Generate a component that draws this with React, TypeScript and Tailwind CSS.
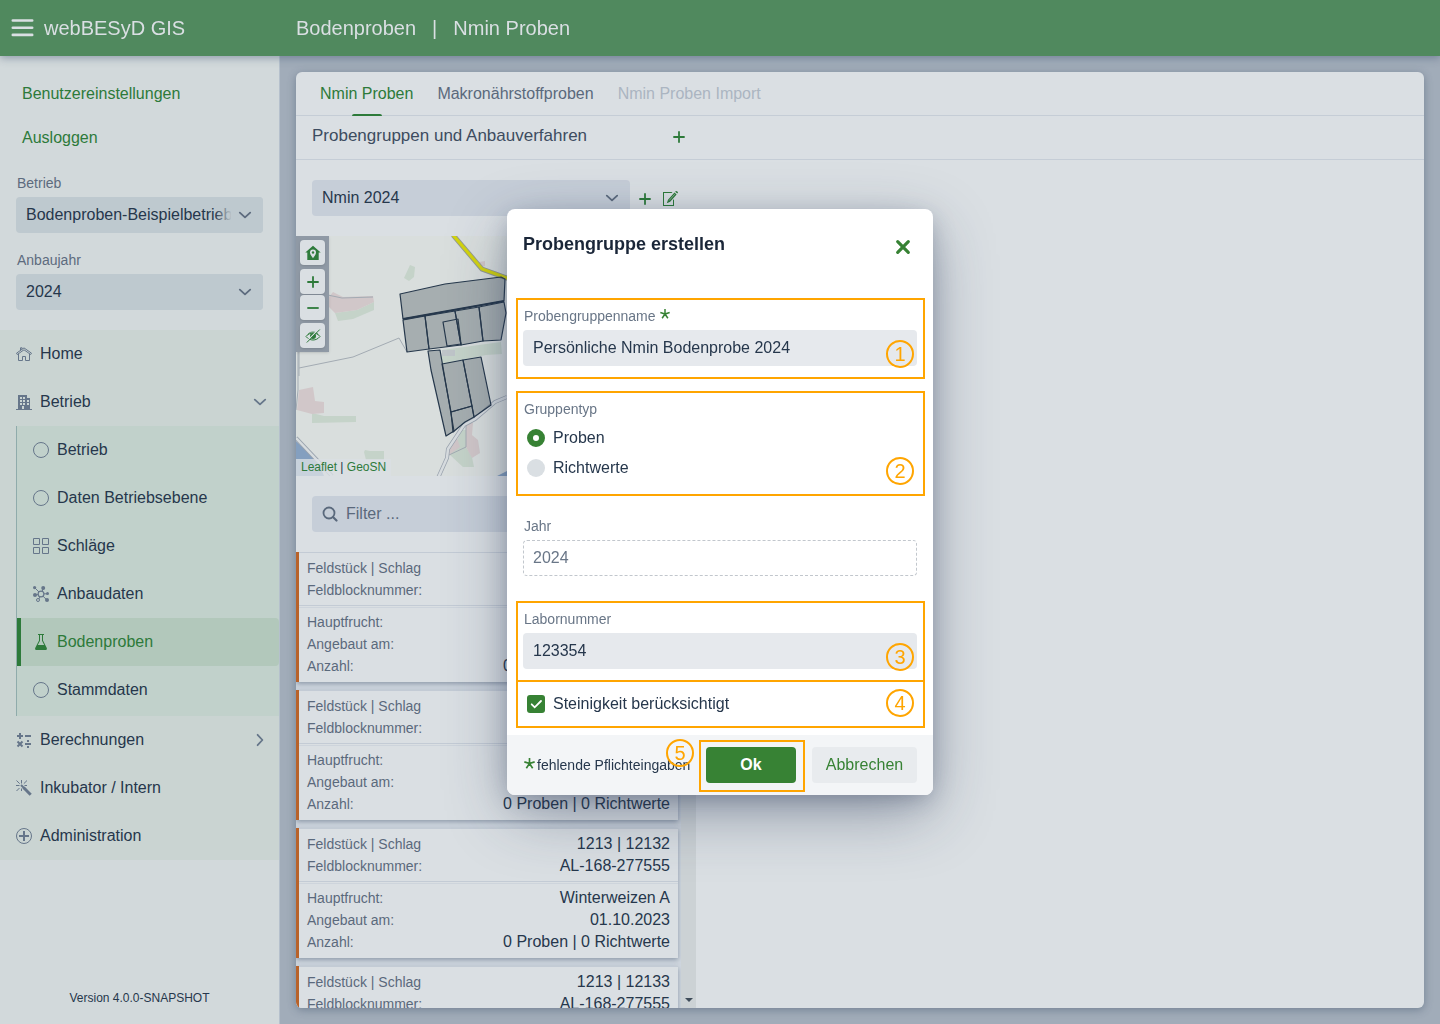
import { useState } from 'react';
import clsx from 'clsx';

type IconProps = {
  className?: string;
};

const iconBase = (className?: string) => ({
  viewBox: '0 0 16 16',
  className: clsx('shrink-0', className),
  'aria-hidden': true,
});

const ChevronIcon = ({ className }: IconProps) => (
  <svg {...iconBase(className)} fill="none" stroke="currentColor" strokeWidth="1.8" strokeLinecap="round" strokeLinejoin="round">
    <path d="M2.8 5.6 8 10.4l5.2-4.8" />
  </svg>
);

const PlusIcon = ({ className }: IconProps) => (
  <svg {...iconBase(className)} fill="none" stroke="currentColor" strokeWidth="1.8">
    <path d="M8 2.3v11.4M2.3 8h11.4" />
  </svg>
);

const MinusIcon = ({ className }: IconProps) => (
  <svg {...iconBase(className)} fill="none" stroke="currentColor" strokeWidth="1.8">
    <path d="M2.3 8h11.4" />
  </svg>
);

const HomeIcon = ({ className }: IconProps) => (
  <svg {...iconBase(className)} fill="none" stroke="currentColor">
    <path d="M4.5 4.5V1.8h1.6v1.3" />
    <path d="M.5 7.2 8 1.9l7.5 5.3-.8 1.3L8 3.8 1.3 8.5z" />
    <path d="M2.5 8v6.5h4v-4h3v4h4V8" />
  </svg>
);

const BuildingIcon = ({ className }: IconProps) => (
  <svg {...iconBase(className)} fill="currentColor">
    <path
      fillRule="evenodd"
      d="M14 15V4h-3V1H2v14H0v1h16v-1zM6 14v-2h2v3H6zM4 3h2v2H4zm3 0h2v2H7zM4 6h2v2H4zm3 0h2v2H7zM4 9h2v2H4zm3 0h2v2H7zm4-3h2v2h-2zm0 3h2v2h-2z"
    />
  </svg>
);

const CircleIcon = ({ className }: IconProps) => (
  <svg {...iconBase(className)} fill="none" stroke="currentColor">
    <circle cx="8" cy="8" r="7.5" />
  </svg>
);

const GridIcon = ({ className }: IconProps) => (
  <svg {...iconBase(className)} fill="none" stroke="currentColor">
    <path d="M.5.5h6v6h-6zM9.5.5h6v6h-6zM.5 9.5h6v6h-6zM9.5 9.5h6v6h-6z" />
  </svg>
);

const ClusterIcon = ({ className }: IconProps) => (
  <svg {...iconBase(className)} fill="none" stroke="currentColor">
    <circle cx="8" cy="8" r="2.9" strokeWidth="1.2" />
    <path d="m2 2 4 4M9.2 5.4 10 2.500M11 7.800h3.500M9.900 10.100l3.600 3.500M7 10.800 5.800 13M5.200 8.500 2.500 9" />
    <g fill="currentColor" stroke="none">
      <circle cx="1.600" cy="1.600" r="1.600" />
      <circle cx="10.200" cy="2" r="2" />
      <circle cx="14.500" cy="7.500" r="1.500" />
      <circle cx="2" cy="9" r="2" />
      <circle cx="14" cy="14" r="2" />
    </g>
    <circle cx="5" cy="14" r="1.500" />
  </svg>
);

const FlaskIcon = ({ className }: IconProps) => (
  <svg {...iconBase(className)} fill="currentColor">
    <path
      fillRule="evenodd"
      d="M5 0h6v1h-1v5.500l3.800 7.500c.3 1 0 2-1 2H3.200c-1 0-1.300-1-1-2L6 6.500V1H5zM7 1v5.700L4.800 11h6.400L9 6.700V1z"
    />
  </svg>
);

const CalcIcon = ({ className }: IconProps) => (
  <svg {...iconBase(className)} fill="none" stroke="currentColor" strokeWidth="2">
    <path d="M4 1v6M1 4h6M9 4h6M9 12h6M1.500 9.500l5 5M6.500 9.500l-5 5" />
    <path d="M11 9h2M11 15h2" />
  </svg>
);

const MagicIcon = ({ className }: IconProps) => (
  <svg {...iconBase(className)} fill="none" stroke="currentColor">
    <path d="M5.500 0v3.500M.5.5l3.200 3.200M11 .5 7.800 3.700M0 5.500h3.500M8.500 5.500H11M.5 11l3-3M5.500 8.500V11" />
    <path d="m5 5 3.500 3.500" strokeWidth="2" />
    <path d="m7.500 7.500 7.200 7.200" strokeWidth="3" />
  </svg>
);

const PlusCircleIcon = ({ className }: IconProps) => (
  <svg {...iconBase(className)} fill="none" stroke="currentColor">
    <circle cx="8" cy="8" r="7.500" />
    <path d="M8 3v10M3 8h10" strokeWidth="2" />
  </svg>
);

const EditIcon = ({ className }: IconProps) => (
  <svg {...iconBase(className)} fill="currentColor">
    <path d="M10.500 2H1v14h11V9l-1 1.200V15H2V3h7.600z" />
    <path d="m13.200 1.800 2 1.800.7-.8c.5-.6-1.500-2.300-2-1.700zM12.500 2.600 6 9.700 4.800 13.300l3.400-1.500 6.400-7.300z" />
    <path d="m12.800 4.200-5.600 6.200" stroke="#dadfe3" strokeWidth=".5" />
  </svg>
);

const HomePinIcon = ({ className }: IconProps) => (
  <svg {...iconBase(className)} fill="currentColor">
    <path
      fillRule="evenodd"
      d="M8 .8.3 7.400h2V15h11.400V7.400h2zM8 4.500a3 3 0 0 1 3 3C11 9.700 8 13.200 8 13.200S5 9.700 5 7.500a3 3 0 0 1 3-3z"
    />
    <circle cx="8" cy="7.500" r="1.200" />
  </svg>
);

const EyeSlashIcon = ({ className }: IconProps) => (
  <svg {...iconBase(className)} fill="none" stroke="currentColor">
    <path d="M1 8.500C3 6 5.500 5 8 5s5 1 7 3.500C13 11 10.500 12 8 12s-5-1-7-3.500z" />
    <path d="M2.500 6.500C4.500 4.500 6 4 8 4s3.500.5 5.500 2.500" strokeWidth=".7" />
    <circle cx="8" cy="8" r="3" fill="currentColor" stroke="none" />
    <path d="M13.800 1.200.8 14.200" stroke="#dadfe3" strokeWidth="1.200" />
    <path d="M14.800 1.500 1.800 14.500" />
  </svg>
);

const SearchIcon = ({ className }: IconProps) => (
  <svg {...iconBase(className)} fill="none" stroke="currentColor" strokeWidth="1.800" strokeLinecap="round">
    <circle cx="7" cy="7" r="5.500" />
    <path d="m11.200 11.200 3.300 3.300" strokeWidth="2.200" />
  </svg>
);

const CloseIcon = ({ className }: IconProps) => (
  <svg {...iconBase(className)} fill="none" stroke="currentColor" strokeWidth="3.200" strokeLinecap="round">
    <path d="m2.700 2.700 10.600 10.600M13.300 2.700 2.700 13.300" />
  </svg>
);

const AsteriskIcon = ({ className }: IconProps) => (
  <svg {...iconBase(className)} fill="none" stroke="currentColor" strokeWidth="2.400">
    <path d="M8 8V0M8 8 .5 5.600M8 8l7.500-2.400M8 8l-4.600 6.800M8 8l4.600 6.800" />
  </svg>
);

const subItems = [
  { label: 'Betrieb', Icon: CircleIcon },
  { label: 'Daten Betriebsebene', Icon: CircleIcon },
  { label: 'Schläge', Icon: GridIcon },
  { label: 'Anbaudaten', Icon: ClusterIcon },
  { label: 'Bodenproben', Icon: FlaskIcon, active: true },
  { label: 'Stammdaten', Icon: CircleIcon },
];

const fields = ['12130', '12131', '12132', '12133'];

type SelectFieldProps = {
  id: string;
  label: string;
  value: string;
};

const SidebarSelect = ({ id, label, value }: SelectFieldProps) => (
  <div>
    <label htmlFor={id} className="block h-7 px-px text-sm leading-7 text-[#5d6b7e]">
      {label}
    </label>
    <div className="relative">
      <select
        id={id}
        className="block h-9 w-full appearance-none rounded-sm bg-[#bec9cf] pr-8 pl-2.5 text-[#26374c]"
      >
        <option>{value}</option>
      </select>
      <span className="pointer-events-none absolute inset-y-0 right-0 flex w-12 items-center justify-end rounded-sm bg-linear-to-r from-[#bec9cf]/0 to-[#bec9cf] to-35% pr-2.5 text-[#5d6b7e]">
        <ChevronIcon className="size-4" />
      </span>
    </div>
  </div>
);

type NavItemProps = {
  label: string;
  Icon: (props: IconProps) => React.ReactNode;
  arrow?: 'down' | 'right';
};

const NavItem = ({ label, Icon, arrow }: NavItemProps) => (
  <a href="#" className="flex h-12 items-center gap-2 pr-[11px] pl-4 text-[#26374c]">
    <Icon className="size-4 text-[#66768a]" />
    <span className="flex-1">{label}</span>
    {arrow && <ChevronIcon className={clsx('size-4 text-[#66768a]', arrow === 'right' && '-rotate-90')} />}
  </a>
);

const Sidebar = () => (
  <aside className="flex w-70 shrink-0 flex-col border-r border-[#b5c0cc] bg-[#d2d9db] pt-4">
    <div className="flex flex-col px-[22px] text-[#2d7a3a]">
      <a href="#" className="flex h-11 items-center">Benutzereinstellungen</a>
      <a href="#" className="flex h-11 items-center">Ausloggen</a>
    </div>
    <div className="flex flex-col gap-[13px] px-4 pt-[9px] pb-5">
      <SidebarSelect id="betrieb" label="Betrieb" value="Bodenproben-Beispielbetrieb" />
      <SidebarSelect id="anbaujahr" label="Anbaujahr" value="2024" />
    </div>
    <nav className="bg-[#cad4d2]">
      <NavItem label="Home" Icon={HomeIcon} />
      <NavItem label="Betrieb" Icon={BuildingIcon} arrow="down" />
      <div className="ml-4 border-l border-[#8fabab] bg-[#c1d1cb] pb-0.5">
        {subItems.map(({ label, Icon, active }) => (
          <a
            key={label}
            href="#"
            className={clsx(
              'flex h-12 items-center gap-2',
              active
                ? 'rounded-r border-l-4 border-[#2d7a3a] bg-[#b2c8bb] pl-3 text-[#2d7a3a]'
                : 'pl-4 text-[#26374c]',
            )}
          >
            <Icon className={clsx('size-4', !active && 'text-[#66768a]')} />
            {label}
          </a>
        ))}
      </div>
      <NavItem label="Berechnungen" Icon={CalcIcon} arrow="right" />
      <NavItem label="Inkubator / Intern" Icon={MagicIcon} />
      <NavItem label="Administration" Icon={PlusCircleIcon} />
    </nav>
    <div className="mt-auto pb-[18px] text-center text-xs text-[#26374c]">Version 4.0.0-SNAPSHOT</div>
  </aside>
);

const mapButton =
  'flex size-[25px] items-center justify-center rounded-sm bg-[#dadfe3] text-[#2d7a3a] shadow-sm';

const FieldMap = () => (
  <div className="relative h-60 shrink-0 overflow-hidden bg-[#d9dedd]">
    <svg viewBox="0 0 400 240" className="block h-60 w-[400px]" role="img" aria-label="Karte der Schläge">
      <g fill="#c5d3c9">
        <path d="M114 29l5 2-1 10-5 4-5-3z" />
        <path d="M39 77l22-3 17-8v8l-21 9-15 2z" />
        <path d="M16 177l12 3h32v6l-44 1z" />
        <path d="M68 216l1-2 5 1h14v9H70z" />
        <path d="M146 114l59-8 1 12-16 1-39 8-5 1z" />
        <path d="M166 194h4v17l6 10 2 10h-11l-13-12z" />
      </g>
      <g fill="#d1c7c9">
        <path d="M37 56l10 5 30-1 1 6-17 8-22 3-6-6V61z" />
        <path d="M183 26l6-1v5l-3 1z" />
        <path d="M3 154l14-3 2 14 9 1v11l-12 1-15-4z" />
        <path d="M170 187h7l-1 12 6 5 2 13-8 5-6-11z" />
        <path d="M161 202l3 9-11 8v-7z" />
      </g>
      <path d="M146 114h13v6h-13z" fill="#bfc5c9" />
      <path d="M0 205l22 20 6 15H0zM201 240l10-5v5z" fill="#849fbf" />
      <g fill="none" stroke="#a3abb3">
        <path d="M0 52l27 6 19 4 31-1" />
        <path d="M3 132l54-11 46-19 8 14" />
        <path d="M0 70l2 30v54l-2 20M3 100v40" />
        <path d="M170 187v24l-17 8" />
      </g>
      <path d="M0 202l36 38M211 161l-12 5-20 17-11 6-16 24-1 9-9 20" fill="none" stroke="#9aa3ae" strokeWidth="4" />
      <path d="M0 202l36 38M211 161l-12 5-20 17-11 6-16 24-1 9-9 20" fill="none" stroke="#d7dcdf" strokeWidth="2.5" />
      <path d="M157-1l29 34 25 9 40 12" fill="none" stroke="#939a95" strokeWidth="5" />
      <path d="M157-1l29 34 25 9 40 12" fill="none" stroke="#d3d40e" strokeWidth="3.2" />
      <g fill="#3c4a50" fillOpacity=".32" stroke="#26384c" strokeWidth="1.2" strokeLinejoin="round">
        <path d="M104 58l45-10 56-7 4 2-1 22-101 18z" />
        <path d="M107 84l22-4 4 33-22 3z" />
        <path d="M129 80l30-5 6 34-32 4z" />
        <path d="M147 86l15-3 3 25-14 2z" fillOpacity="0" />
        <path d="M159 75l24-4 4 34-22 4z" />
        <path d="M183 71l25-5 2 11-5 27-18 1z" />
        <path d="M132 115l12-1 14 81-8 5-15-66z" />
        <path d="M146 128l21-4 9 46-21 6z" />
        <path d="M167 124l18-3 10 48-17 12z" />
        <path d="M155 176l21-6 2 11-9 5-12 10z" />
      </g>
      <path d="M107 83l101-18" stroke="#26384c" strokeWidth="2" />
    </svg>
    <div className="absolute top-0 left-0 flex h-29 w-[33px] flex-col items-center bg-[#8f99a5] pt-1 shadow">
      <button type="button" aria-label="Betriebsstandort" className={mapButton}>
        <HomePinIcon className="size-4" />
      </button>
      <button type="button" aria-label="Vergrößern" className={clsx(mapButton, 'mt-1')}>
        <PlusIcon className="size-4" />
      </button>
      <button type="button" aria-label="Verkleinern" className={clsx(mapButton, 'mt-px')}>
        <MinusIcon className="size-4" />
      </button>
      <button type="button" aria-label="Ebene ausblenden" className={clsx(mapButton, 'mt-[3px]')}>
        <EyeSlashIcon className="size-4" />
      </button>
    </div>
    <div className="absolute bottom-0 left-0 bg-[#dadfe3]/80 px-[5px] text-xs leading-[17px] text-[#26374c]">
      <a href="#" className="text-[#2d7a3a]">Leaflet</a> | <a href="#" className="text-[#2d7a3a]">GeoSN</a>
    </div>
  </div>
);

const FieldCard = ({ number }: { number: string }) => {
  const row = 'flex h-[22px] items-center justify-between';
  const term = 'text-sm text-[#5a697c]';

  return (
    <li className="border-l-[3px] border-[#b8622a] bg-[#dadfe3] text-[#26374c] shadow-[0_2px_5px_rgba(60,80,105,0.45)]">
      <dl>
        <div className="border-y border-[#c3cbd5] px-2 py-1">
          <div className={row}>
            <dt className={term}>Feldstück | Schlag</dt>
            <dd>1213 | {number}</dd>
          </div>
          <div className={row}>
            <dt className={term}>Feldblocknummer:</dt>
            <dd>AL-168-277555</dd>
          </div>
        </div>
        <div className="mt-px border-t border-[#cdd4dc] px-2 pt-[3px] pb-[5px]">
          <div className={row}>
            <dt className={term}>Hauptfrucht:</dt>
            <dd>Winterweizen A</dd>
          </div>
          <div className={row}>
            <dt className={term}>Angebaut am:</dt>
            <dd>01.10.2023</dd>
          </div>
          <div className={row}>
            <dt className={term}>Anzahl:</dt>
            <dd>0 Proben | 0 Richtwerte</dd>
          </div>
        </div>
      </dl>
    </li>
  );
};

const SamplePanel = () => (
  <section className="flex min-h-0 flex-1 flex-col overflow-hidden rounded-md bg-[#dadfe3] shadow-[0_2px_8px_rgba(60,80,105,0.45)]">
    <div role="tablist" className="flex h-11 shrink-0 gap-6 border-b border-[#c5cdd6] px-6">
      <button type="button" role="tab" aria-selected="true" className="relative text-[#2d7a3a]">
        Nmin Proben
        <span className="absolute -bottom-px left-1/2 h-0.5 w-[30px] -translate-x-1/2 rounded-t-sm bg-[#2d7a3a]" />
      </button>
      <button type="button" role="tab" className="text-[#5a697c]">Makronährstoffproben</button>
      <button type="button" role="tab" disabled className="text-[#abb5c1]">Nmin Proben Import</button>
    </div>
    <div className="h-11 shrink-0 border-b border-[#c5cdd6]">
      <div className="flex h-10 w-[400px] items-center justify-between pr-[9px] pl-4">
        <h2 className="text-[17px] text-[#3d4c60]">Probengruppen und Anbauverfahren</h2>
        <button type="button" aria-label="Anbauverfahren hinzufügen" className="pt-0.5 text-[#2d7a3a]">
          <PlusIcon className="size-4" />
        </button>
      </div>
    </div>
    <div className="flex min-h-0 w-[400px] flex-1 flex-col">
      <div className="flex shrink-0 items-center px-4 py-5">
        <div className="relative flex-1">
          <select
            aria-label="Probengruppe"
            className="block h-9 w-full appearance-none rounded-sm bg-[#c6ced8] px-2.5 text-[#26374c]"
          >
            <option>Nmin 2024</option>
          </select>
          <ChevronIcon className="pointer-events-none absolute top-2.5 right-2.5 size-4 text-[#5d6b7e]" />
        </div>
        <button type="button" aria-label="Probengruppe hinzufügen" className="ml-[7px] pt-0.5 text-[#2d7a3a]">
          <PlusIcon className="size-4" />
        </button>
        <button type="button" aria-label="Probengruppe bearbeiten" className="mr-0.5 ml-[9px] text-[#2d7a3a]">
          <EditIcon className="size-4" />
        </button>
      </div>
      <FieldMap />
      <div className="relative mx-4 my-5 shrink-0">
        <SearchIcon className="absolute top-2.5 left-2.5 size-4 text-[#5a697c]" />
        <input
          type="search"
          aria-label="Filter"
          placeholder="Filter ..."
          className="block h-9 w-full rounded-sm bg-[#c6ced8] pr-2.5 pl-[34px] placeholder:text-[#5a697c]"
        />
      </div>
      <div className="flex min-h-0 flex-1">
        <ul className="flex min-w-0 flex-1 flex-col gap-2 overflow-hidden bg-[#d0d7df] pr-[3px]">
          {fields.map((number) => (
            <FieldCard key={number} number={number} />
          ))}
        </ul>
        <div className="flex w-[15px] items-end justify-center bg-[#ccd2d5] pb-1.5">
          <svg viewBox="0 0 8 4" className="h-1 w-2" aria-hidden="true">
            <path d="M0 0h8L4 4z" fill="#3f4c5a" />
          </svg>
        </div>
      </div>
    </div>
  </section>
);

const Marker = ({ step, className = 'right-[9px] bottom-[9px]' }: { step: number; className?: string }) => (
  <span
    className={clsx(
      'pointer-events-none absolute flex size-7 items-center justify-center',
      'rounded-full border-2 border-[#ffa500] text-xl leading-6 text-[#ffa500]',
      className,
    )}
  >
    {step}
  </span>
);

const fieldLabel = 'flex h-7 items-center px-px text-sm text-[#697687]';
const outlined = 'relative border-2 border-[#ffa500] pr-1.5 pl-[5px]';

const CreateGroupDialog = () => {
  const [name, setName] = useState('Persönliche Nmin Bodenprobe 2024');
  const [type, setType] = useState('Proben');
  const [lab, setLab] = useState('123354');
  const [stones, setStones] = useState(true);

  return (
    <div className="fixed inset-0 flex items-center justify-center pb-5">
      <form
        role="dialog"
        aria-labelledby="dialog-title"
        onSubmit={(e) => e.preventDefault()}
        className="w-[426px] overflow-hidden rounded-lg bg-white text-[#26374c] shadow-[0_6px_24px_-4px_rgba(35,50,80,0.35),0_20px_64px_-4px_rgba(35,50,80,0.42)]"
      >
        <header className="flex h-[89px] items-start justify-between px-4 pt-[21px]">
          <h1 id="dialog-title" className="text-lg font-bold text-[#1a2638]">Probengruppe erstellen</h1>
          <button type="button" aria-label="Schließen" className="mt-[9px] mr-1.5 text-[#378234]">
            <CloseIcon className="size-4" />
          </button>
        </header>
        <div className="pr-2 pb-[7px] pl-[9px]">
          <div className={clsx(outlined, 'pt-0.5 pb-[11px]')}>
            <label htmlFor="name" className={fieldLabel}>
              Probengruppenname
              <AsteriskIcon className="mb-1 ml-1 size-2.5 text-[#378234]" />
            </label>
            <input
              id="name"
              value={name}
              onChange={(e) => setName(e.target.value)}
              className="block h-9 w-full rounded-sm bg-[#e6e9ed] px-2.5"
            />
            <Marker step={1} />
          </div>
          <fieldset className={clsx(outlined, 'mt-3 pt-0.5 pb-[11px]')}>
            <legend className="contents">
              <span className={fieldLabel}>Gruppentyp</span>
            </legend>
            {['Proben', 'Richtwerte'].map((option) => (
              <label key={option} className="flex h-[30px] items-center gap-2 pl-1">
                <input
                  type="radio"
                  name="type"
                  checked={type === option}
                  onChange={() => setType(option)}
                  className="size-[18px] appearance-none rounded-full bg-[#dadfe3] checked:border-6 checked:border-[#378234] checked:bg-white"
                />
                {option}
              </label>
            ))}
            <Marker step={2} />
          </fieldset>
          <div className="mt-4 mb-[25px] pr-2 pl-[7px]">
            <label htmlFor="year" className={fieldLabel}>Jahr</label>
            <input
              id="year"
              value="2024"
              readOnly
              className="block h-9 w-full rounded-sm border border-dashed border-[#c2c7cd] px-[9px] text-[#697687]"
            />
          </div>
          <div className={clsx(outlined, 'pt-0.5 pb-[11px]')}>
            <label htmlFor="lab" className={fieldLabel}>Labornummer</label>
            <input
              id="lab"
              value={lab}
              onChange={(e) => setLab(e.target.value)}
              className="block h-9 w-full rounded-sm bg-[#e6e9ed] px-2.5"
            />
            <Marker step={3} />
          </div>
          <div className={clsx(outlined, '-mt-0.5')}>
            <label className="flex h-11 items-center gap-2 pl-1">
              <span className="relative flex">
                <input
                  type="checkbox"
                  checked={stones}
                  onChange={(e) => setStones(e.target.checked)}
                  className="peer size-[18px] appearance-none rounded-[3px] bg-[#dadfe3] checked:bg-[#378234]"
                />
                <svg
                  viewBox="0 0 18 18"
                  className="pointer-events-none absolute inset-0 hidden size-[18px] peer-checked:block"
                  fill="none"
                  stroke="#fff"
                  strokeWidth="1.8"
                  strokeLinecap="round"
                  aria-hidden="true"
                >
                  <path d="M4.7 9.3 7.7 12.3 14 6" />
                </svg>
              </span>
              Steinigkeit berücksichtigt
            </label>
            <Marker step={4} />
          </div>
        </div>
        <footer className="flex h-15 items-center bg-[#f3f5f7] pr-4 pl-[17px]">
          <AsteriskIcon className="mr-0.5 mb-1 size-[11px] text-[#378234]" />
          <span className="text-sm whitespace-nowrap">fehlende Pflichteingaben</span>
          <div className="relative mt-0.5 mr-[7px] ml-auto border-2 border-[#ffa500] pt-[5px] pr-[7px] pb-[7px] pl-[5px]">
            <button type="submit" className="block h-9 w-[90px] rounded-sm bg-[#378234] font-bold text-white">
              Ok
            </button>
            <Marker step={5} className="-top-[3px] right-[109px]" />
          </div>
          <button type="button" className="h-9 w-[105px] rounded-sm bg-[#e8ebee] text-[#378234]">
            Abbrechen
          </button>
        </footer>
      </form>
    </div>
  );
};

export default function App() {
  return (
    <div className="flex h-screen flex-col overflow-hidden bg-[#a1acb9] font-['Liberation_Sans',Arial,sans-serif] text-base">
      <header className="relative z-10 flex h-14 shrink-0 items-center bg-[#50895e] text-xl text-[#dadfe3] shadow-[0_2px_8px_rgba(60,80,110,0.45)]">
        <div className="flex w-74 items-center gap-2.5 pl-[11px]">
          <button type="button" aria-label="Menü">
            <svg
              viewBox="0 0 22 18"
              className="h-[18px] w-[23px]"
              stroke="currentColor"
              strokeWidth="2.6"
              strokeLinecap="round"
              aria-hidden="true"
            >
              <path d="M1.300 1.500h19.400M1.300 8.700h19.400M1.300 15.900h19.400" />
            </svg>
          </button>
          <span>webBESyD GIS</span>
        </div>
        <div className="flex gap-4">
          <span>Bodenproben</span>
          <span>|</span>
          <span>Nmin Proben</span>
        </div>
      </header>
      <div className="flex min-h-0 flex-1">
        <Sidebar />
        <main className="flex min-w-0 flex-1 flex-col p-4">
          <SamplePanel />
        </main>
      </div>
      <CreateGroupDialog />
    </div>
  );
}
